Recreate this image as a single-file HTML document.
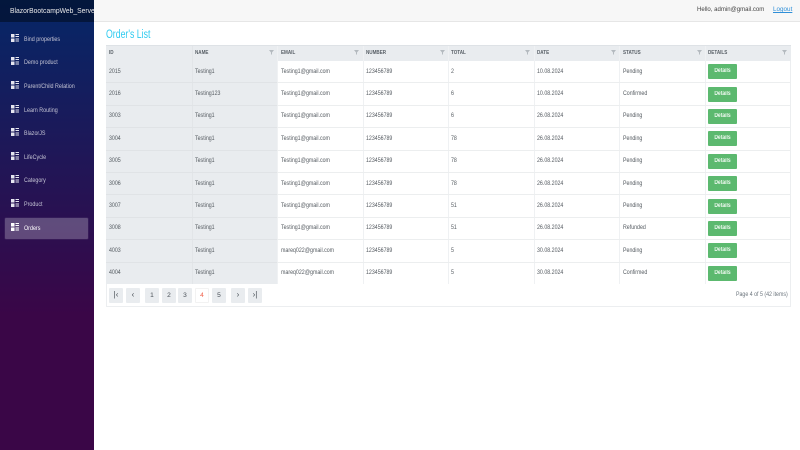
<!DOCTYPE html>
<html lang="en"><head><meta charset="utf-8"><title>Orders</title>
<style>
*{box-sizing:border-box;margin:0;padding:0}
html,body{width:800px;height:450px;overflow:hidden;background:#fff;font-family:"Liberation Sans",sans-serif}
#w{position:absolute;left:0;top:0;width:800px;height:450px;overflow:hidden;filter:blur(.32px)}
.a{position:absolute;white-space:nowrap;transform-origin:0 50%}
#sb{position:absolute;left:0;top:0;width:94px;height:450px;background:linear-gradient(180deg,#052767 0%,#3a0647 70%);overflow:hidden}
#brand{position:absolute;left:0;top:0;width:94px;height:22px;background:rgba(0,0,0,.4);color:#e8e8e8;overflow:hidden}
#brand span{position:absolute;left:10px;top:5px;font-size:7.6px;line-height:11px;white-space:nowrap;transform:scaleX(.89);transform-origin:0 50%}
.nav{position:absolute;left:5px;width:83px;height:21px;color:#c4c4d4;border-radius:1px}
.nav span{position:absolute;left:19px;top:6px;font-size:6.4px;line-height:9px;white-space:nowrap;transform:scaleX(.84);transform-origin:0 50%}
.nav.on{background:rgba(255,255,255,.25);box-shadow:0 0 0 .5px rgba(255,255,255,.1)}
.nav.on span{color:#fff}
.nav svg{position:absolute;left:6px;top:5px;width:8px;height:8px}
#top{position:absolute;left:94px;top:0;width:706px;height:22px;background:#f7f7f7;border-bottom:1px solid #e6e6e6}
#title{position:absolute;left:106px;top:28px;font-size:11.500px;line-height:14px;color:#2fcbf0;white-space:nowrap;transform:scaleX(.76);transform-origin:0 50%}
#grid{position:absolute;left:106px;top:45px;width:685px;height:262px;border:1px solid #eceef0;border-top:0;background:#fff}
#hd{position:absolute;left:106px;top:45px;width:685px;height:16px;background:#e9ecef;border-top:1px solid #dee2e6}
#lk{position:absolute;left:106px;top:61px;width:171px;height:223px;background:#e9ecef}
.h{position:absolute;top:50px;font-size:5.400px;line-height:7px;font-weight:bold;color:#5a6168;white-space:nowrap;transform:scaleX(.85);transform-origin:0 50%}
.c{position:absolute;font-size:6.500px;line-height:8px;color:#555b61;white-space:nowrap;transform:scaleX(.81);transform-origin:0 50%}
.v{position:absolute;top:46px;width:1px;height:238px;background:#eff1f3}
.l{position:absolute;left:106px;width:685px;height:1px;background:linear-gradient(90deg,#e0e3e6 171px,#eceeef 171px)}
.f{position:absolute;top:50px;width:5px;height:5px}
.b{position:absolute;left:708px;width:29px;height:15px;background:#5cb96f;color:#fff;text-align:center;border-radius:1px;font-size:6px;line-height:15px}
.b span{display:block;font-size:6px;font-weight:bold;line-height:15px;transform:scaleX(.83);transform-origin:50% 50%;color:#eef8f0}
.p{position:absolute;top:288px;width:14px;height:15px;background:#e9ecef;color:#495057;font-size:6.600px;text-align:center;line-height:15px;border-radius:1px}
.p.on{background:#fff;color:#f0604a;border:1px solid #f2f2f2;line-height:13px}
.p.g{font-size:8px;font-weight:normal;line-height:14px}
</style></head><body><div id="w">
<div id="sb">
<div id="brand"><span>BlazorBootcampWeb_Server</span></div>
<div class="nav" style="top:29px"><svg viewBox="0 0 8 8"><path fill="#e6e6f0" d="M0 0h3.500v3.500H0zM4.500 0H8v1H4.500zM4.500 2H8v1H4.500zM0 4.500h3.500V8H0zM4.500 4.500H8v1H4.500zM4.500 6.500H8v1H4.500z"/></svg><span>Bind properties</span></div>
<div class="nav" style="top:52px"><svg viewBox="0 0 8 8"><path fill="#e6e6f0" d="M0 0h3.500v3.500H0zM4.500 0H8v1H4.500zM4.500 2H8v1H4.500zM0 4.500h3.500V8H0zM4.500 4.500H8v1H4.500zM4.500 6.500H8v1H4.500z"/></svg><span>Demo product</span></div>
<div class="nav" style="top:76px"><svg viewBox="0 0 8 8"><path fill="#e6e6f0" d="M0 0h3.500v3.500H0zM4.500 0H8v1H4.500zM4.500 2H8v1H4.500zM0 4.500h3.500V8H0zM4.500 4.500H8v1H4.500zM4.500 6.500H8v1H4.500z"/></svg><span>Parent/Child Relation</span></div>
<div class="nav" style="top:100px"><svg viewBox="0 0 8 8"><path fill="#e6e6f0" d="M0 0h3.500v3.500H0zM4.500 0H8v1H4.500zM4.500 2H8v1H4.500zM0 4.500h3.500V8H0zM4.500 4.500H8v1H4.500zM4.500 6.500H8v1H4.500z"/></svg><span>Learn Routing</span></div>
<div class="nav" style="top:123px"><svg viewBox="0 0 8 8"><path fill="#e6e6f0" d="M0 0h3.500v3.500H0zM4.500 0H8v1H4.500zM4.500 2H8v1H4.500zM0 4.500h3.500V8H0zM4.500 4.500H8v1H4.500zM4.500 6.500H8v1H4.500z"/></svg><span>BlazorJS</span></div>
<div class="nav" style="top:147px"><svg viewBox="0 0 8 8"><path fill="#e6e6f0" d="M0 0h3.500v3.500H0zM4.500 0H8v1H4.500zM4.500 2H8v1H4.500zM0 4.500h3.500V8H0zM4.500 4.500H8v1H4.500zM4.500 6.500H8v1H4.500z"/></svg><span>LifeCycle</span></div>
<div class="nav" style="top:170px"><svg viewBox="0 0 8 8"><path fill="#e6e6f0" d="M0 0h3.500v3.500H0zM4.500 0H8v1H4.500zM4.500 2H8v1H4.500zM0 4.500h3.500V8H0zM4.500 4.500H8v1H4.500zM4.500 6.500H8v1H4.500z"/></svg><span>Category</span></div>
<div class="nav" style="top:194px"><svg viewBox="0 0 8 8"><path fill="#e6e6f0" d="M0 0h3.500v3.500H0zM4.500 0H8v1H4.500zM4.500 2H8v1H4.500zM0 4.500h3.500V8H0zM4.500 4.500H8v1H4.500zM4.500 6.500H8v1H4.500z"/></svg><span>Product</span></div>
<div class="nav on" style="top:218px"><svg viewBox="0 0 8 8"><path fill="#fff" d="M0 0h3.500v3.500H0zM4.500 0H8v1H4.500zM4.500 2H8v1H4.500zM0 4.500h3.500V8H0zM4.500 4.500H8v1H4.500zM4.500 6.500H8v1H4.500z"/></svg><span>Orders</span></div>
</div>
<div id="top"></div>
<div class="a" style="left:697px;top:5px;font-size:6.800px;line-height:9px;color:#444;transform:scaleX(.89)">Hello, admin@gmail.com</div>
<div class="a" style="left:773px;top:5px;font-size:6.800px;line-height:9px;color:#2f8fd8;text-decoration:underline;transform:scaleX(.93)">Logout</div>
<div id="title">Order's List</div>
<div id="grid"></div><div id="hd"></div><div id="lk"></div>
<div class="v" style="left:192px;background:#e2e5e8"></div><div class="v" style="left:277px"></div><div class="v" style="left:363px"></div><div class="v" style="left:448px"></div><div class="v" style="left:534px"></div><div class="v" style="left:619px"></div><div class="v" style="left:705px"></div>
<div class="l" style="top:82px"></div><div class="l" style="top:105px"></div><div class="l" style="top:127px"></div><div class="l" style="top:150px"></div><div class="l" style="top:172px"></div><div class="l" style="top:194px"></div><div class="l" style="top:217px"></div><div class="l" style="top:239px"></div><div class="l" style="top:262px"></div>
<div class="h" style="left:109px">ID</div><div class="h" style="left:195px">NAME</div><div class="h" style="left:281px">EMAIL</div><div class="h" style="left:366px">NUMBER</div><div class="h" style="left:451px">TOTAL</div><div class="h" style="left:537px">DATE</div><div class="h" style="left:623px">STATUS</div><div class="h" style="left:708px">DETAILS</div>
<svg class="f" style="left:269px" viewBox="0 0 5 5"><path fill="#b4babf" d="M0 0h5L3 2.500V5L2 4V2.500z"/></svg>
<svg class="f" style="left:354px" viewBox="0 0 5 5"><path fill="#b4babf" d="M0 0h5L3 2.500V5L2 4V2.500z"/></svg>
<svg class="f" style="left:440px" viewBox="0 0 5 5"><path fill="#b4babf" d="M0 0h5L3 2.500V5L2 4V2.500z"/></svg>
<svg class="f" style="left:525px" viewBox="0 0 5 5"><path fill="#b4babf" d="M0 0h5L3 2.500V5L2 4V2.500z"/></svg>
<svg class="f" style="left:611px" viewBox="0 0 5 5"><path fill="#b4babf" d="M0 0h5L3 2.500V5L2 4V2.500z"/></svg>
<svg class="f" style="left:697px" viewBox="0 0 5 5"><path fill="#b4babf" d="M0 0h5L3 2.500V5L2 4V2.500z"/></svg>
<svg class="f" style="left:782px" viewBox="0 0 5 5"><path fill="#b4babf" d="M0 0h5L3 2.500V5L2 4V2.500z"/></svg>

<div class="c" style="left:109px;top:68px">2015</div><div class="c" style="left:195px;top:68px">Testing1</div><div class="c" style="left:281px;top:68px">Testing1@gmail.com</div><div class="c" style="left:366px;top:68px">123456789</div><div class="c" style="left:451px;top:68px">2</div><div class="c" style="left:537px;top:68px">10.08.2024</div><div class="c" style="left:623px;top:68px">Pending</div><div class="b" style="top:64px"><span>Details</span></div>
<div class="c" style="left:109px;top:90px">2016</div><div class="c" style="left:195px;top:90px">Testing123</div><div class="c" style="left:281px;top:90px">Testing1@gmail.com</div><div class="c" style="left:366px;top:90px">123456789</div><div class="c" style="left:451px;top:90px">6</div><div class="c" style="left:537px;top:90px">10.08.2024</div><div class="c" style="left:623px;top:90px">Confirmed</div><div class="b" style="top:87px"><span>Details</span></div>
<div class="c" style="left:109px;top:112px">3003</div><div class="c" style="left:195px;top:112px">Testing1</div><div class="c" style="left:281px;top:112px">Testing1@gmail.com</div><div class="c" style="left:366px;top:112px">123456789</div><div class="c" style="left:451px;top:112px">6</div><div class="c" style="left:537px;top:112px">26.08.2024</div><div class="c" style="left:623px;top:112px">Pending</div><div class="b" style="top:109px"><span>Details</span></div>
<div class="c" style="left:109px;top:135px">3004</div><div class="c" style="left:195px;top:135px">Testing1</div><div class="c" style="left:281px;top:135px">Testing1@gmail.com</div><div class="c" style="left:366px;top:135px">123456789</div><div class="c" style="left:451px;top:135px">78</div><div class="c" style="left:537px;top:135px">26.08.2024</div><div class="c" style="left:623px;top:135px">Pending</div><div class="b" style="top:131px"><span>Details</span></div>
<div class="c" style="left:109px;top:157px">3005</div><div class="c" style="left:195px;top:157px">Testing1</div><div class="c" style="left:281px;top:157px">Testing1@gmail.com</div><div class="c" style="left:366px;top:157px">123456789</div><div class="c" style="left:451px;top:157px">78</div><div class="c" style="left:537px;top:157px">26.08.2024</div><div class="c" style="left:623px;top:157px">Pending</div><div class="b" style="top:154px"><span>Details</span></div>
<div class="c" style="left:109px;top:180px">3006</div><div class="c" style="left:195px;top:180px">Testing1</div><div class="c" style="left:281px;top:180px">Testing1@gmail.com</div><div class="c" style="left:366px;top:180px">123456789</div><div class="c" style="left:451px;top:180px">78</div><div class="c" style="left:537px;top:180px">26.08.2024</div><div class="c" style="left:623px;top:180px">Pending</div><div class="b" style="top:176px"><span>Details</span></div>
<div class="c" style="left:109px;top:202px">3007</div><div class="c" style="left:195px;top:202px">Testing1</div><div class="c" style="left:281px;top:202px">Testing1@gmail.com</div><div class="c" style="left:366px;top:202px">123456789</div><div class="c" style="left:451px;top:202px">51</div><div class="c" style="left:537px;top:202px">26.08.2024</div><div class="c" style="left:623px;top:202px">Pending</div><div class="b" style="top:199px"><span>Details</span></div>
<div class="c" style="left:109px;top:224px">3008</div><div class="c" style="left:195px;top:224px">Testing1</div><div class="c" style="left:281px;top:224px">Testing1@gmail.com</div><div class="c" style="left:366px;top:224px">123456789</div><div class="c" style="left:451px;top:224px">51</div><div class="c" style="left:537px;top:224px">26.08.2024</div><div class="c" style="left:623px;top:224px">Refunded</div><div class="b" style="top:221px"><span>Details</span></div>
<div class="c" style="left:109px;top:247px">4003</div><div class="c" style="left:195px;top:247px">Testing1</div><div class="c" style="left:281px;top:247px">mareq022@gmail.com</div><div class="c" style="left:366px;top:247px">123456789</div><div class="c" style="left:451px;top:247px">5</div><div class="c" style="left:537px;top:247px">30.08.2024</div><div class="c" style="left:623px;top:247px">Pending</div><div class="b" style="top:243px"><span>Details</span></div>
<div class="c" style="left:109px;top:269px">4004</div><div class="c" style="left:195px;top:269px">Testing1</div><div class="c" style="left:281px;top:269px">mareq022@gmail.com</div><div class="c" style="left:366px;top:269px">123456789</div><div class="c" style="left:451px;top:269px">5</div><div class="c" style="left:537px;top:269px">30.08.2024</div><div class="c" style="left:623px;top:269px">Confirmed</div><div class="b" style="top:266px"><span>Details</span></div>

<div class="p g" style="left:109px">|‹</div><div class="p g" style="left:126px">‹</div><div class="p" style="left:145px">1</div><div class="p" style="left:162px">2</div><div class="p" style="left:178px">3</div><div class="p on" style="left:195px">4</div><div class="p" style="left:212px">5</div><div class="p g" style="left:231px">›</div><div class="p g" style="left:248px">›|</div>
<div class="a" style="left:736px;top:291px;font-size:6.200px;line-height:8px;color:#6c757d;transform:scaleX(.85)">Page 4 of 5 (42 items)</div>
</div></body></html>
